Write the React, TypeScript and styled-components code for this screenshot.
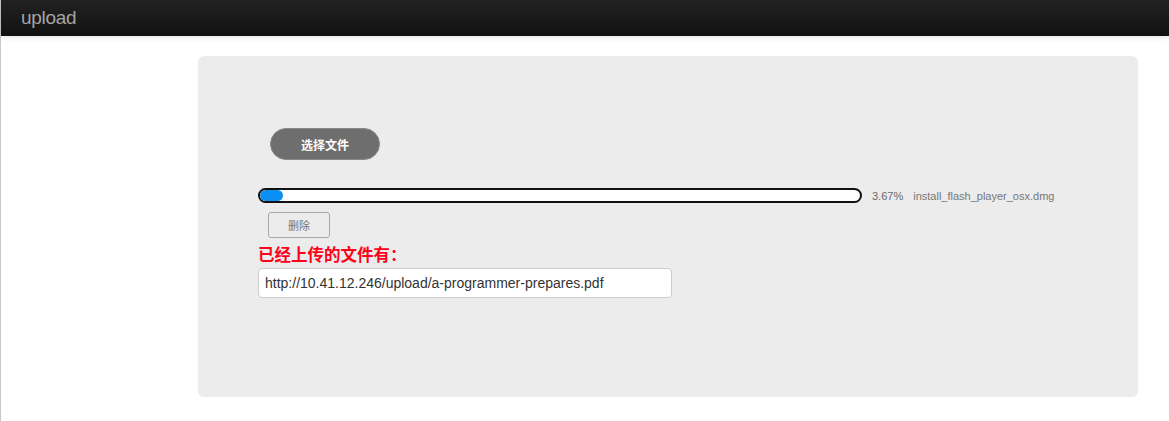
import React from 'react';
import styled, { createGlobalStyle } from 'styled-components';

const GlobalStyle = createGlobalStyle`
  html, body {
    margin: 0;
    padding: 0;
    background: #ffffff;
    font-family: "Liberation Sans", "Noto Sans CJK SC", sans-serif;
  }
`;

const Page = styled.div`
  min-height: 421px;
  border-left: 1px solid #c8c8c8;
  box-sizing: border-box;
`;

const TopBar = styled.header`
  height: 36px;
  background: linear-gradient(#222222, #111111);
  display: flex;
  align-items: center;
  padding-left: 20px;
  box-shadow: 0 1px 6px rgba(0, 0, 0, 0.12);
`;

const Brand = styled.span`
  color: #a4a4a4;
  font-size: 19px;
  font-weight: 300;
  letter-spacing: -0.3px;
`;

const Main = styled.main`
  padding: 20px 31px 0 197px;
`;

const Panel = styled.section`
  height: 341px;
  box-sizing: border-box;
  background: #ececec;
  border-radius: 6px;
  padding: 72px 0 0 60px;
`;

const PickButton = styled.button`
  margin-left: 12px;
  width: 110px;
  height: 32px;
  border-radius: 16px;
  border: 1px solid #888888;
  background: #6e6e6e;
  color: #ffffff;
  font-family: "Noto Sans CJK SC", sans-serif;
  font-size: 12px;
  font-weight: 700;
  cursor: pointer;
`;

const FileRow = styled.div`
  display: flex;
  align-items: center;
  margin-top: 28px;
  gap: 10px;
`;

const Track = styled.div`
  width: 600px;
  height: 11px;
  border: 2px solid #111111;
  border-radius: 8px;
  background: #ffffff;
  overflow: hidden;
`;

const Fill = styled.div`
  height: 100%;
  background: #0b8ff2;
  border-radius: 8px;
`;

const Meta = styled.span<{ $muted?: boolean }>`
  font-size: 11px;
  color: ${p => (p.$muted ? '#777777' : '#6a6a6a')};
`;

const RemoveButton = styled.button`
  display: block;
  margin: 9px 0 0 10px;
  width: 62px;
  height: 26px;
  border: 1px solid #a8a8a8;
  border-radius: 3px;
  background: #ececec;
  color: #777777;
  font-family: "Noto Sans CJK SC", sans-serif;
  font-size: 11px;
`;

const Heading = styled.h3`
  margin: 5px 0 0;
  color: #ff0019;
  font-family: "Noto Sans CJK SC", sans-serif;
  font-size: 16.5px;
  font-weight: 700;
  line-height: 23px;
`;

const LinkField = styled.input`
  display: block;
  margin-top: 2px;
  width: 414px;
  height: 30px;
  box-sizing: border-box;
  border: 1px solid #cccccc;
  border-radius: 4px;
  background: #ffffff;
  padding: 0 6px;
  font-family: "Liberation Sans", sans-serif;
  font-size: 14px;
  color: #333333;
`;

const progress = 3.67;

export default function App() {
  return (
    <Page>
      <GlobalStyle />
      <TopBar>
        <Brand>upload</Brand>
      </TopBar>
      <Main>
        <Panel>
          <PickButton type="button">选择文件</PickButton>
          <FileRow>
            <Track>
              <Fill style={{ width: `${Math.max(progress, 3.8)}%` }} />
            </Track>
            <Meta>{progress}%</Meta>
            <Meta $muted>install_flash_player_osx.dmg</Meta>
          </FileRow>
          <RemoveButton type="button">删除</RemoveButton>
          <Heading>已经上传的文件有：</Heading>
          <LinkField readOnly value="http://10.41.12.246/upload/a-programmer-prepares.pdf" />
        </Panel>
      </Main>
    </Page>
  );
}
